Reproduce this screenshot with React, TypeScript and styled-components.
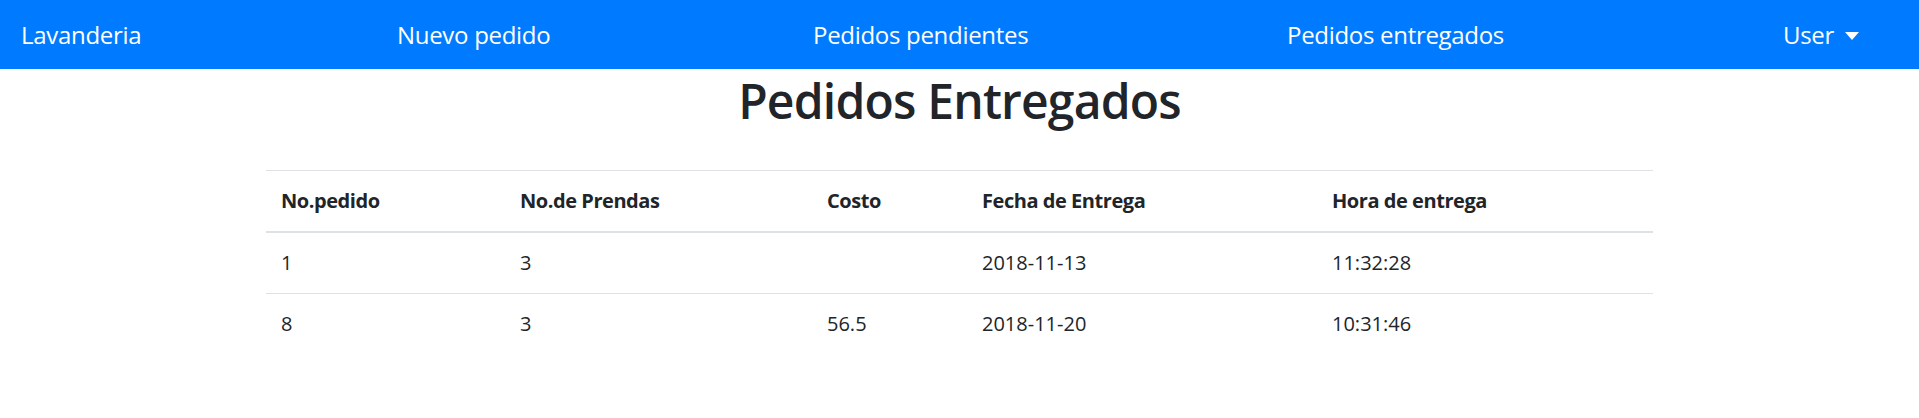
import React from "react";
import styled, { createGlobalStyle } from "styled-components";

const Global = createGlobalStyle`
  html, body { margin: 0; padding: 0; background: #fff; }
  body {
    font-family: "Open Sans", "Noto Sans", sans-serif;
    font-size: 20px;
    line-height: 1.5;
    color: #212529;
  }
  * { box-sizing: border-box; }
`;

const NavBar = styled.nav`
  height: 69px;
  background: #007bff;
  display: grid;
  grid-template-columns: 376px 416px 474px 496px auto;
  align-items: center;
  padding-left: 21px;
`;

const NavItem = styled.a`
  color: #fff;
  font-size: 24px;
  letter-spacing: -0.3px;
  line-height: 1.5;
  text-decoration: none;
  white-space: nowrap;
  display: flex;
  align-items: center;
`;

const Caret = styled.span`
  display: inline-block;
  width: 0;
  height: 0;
  margin-left: 11px;
  margin-top: 2px;
  border-top: 8px solid #fff;
  border-left: 7px solid transparent;
  border-right: 7px solid transparent;
`;

const Title = styled.h1`
  margin: 2px 0 39px;
  text-align: center;
  font-size: 48px;
  font-weight: 600;
  letter-spacing: -0.8px;
  line-height: 60px;
  color: #212529;
`;

const Table = styled.table`
  width: 1387px;
  margin: 0 auto;
  border-collapse: collapse;
  table-layout: fixed;
`;

const HeadCell = styled.th<{ $w?: number }>`
  width: ${(p) => (p.$w ? `${p.$w}px` : "auto")};
  padding: 15px;
  text-align: left;
  font-weight: 700;
  font-size: 20px;
  letter-spacing: -0.45px;
  line-height: 30px;
  border-top: 1px solid #dee2e6;
  border-bottom: 2.5px solid #dee2e6;
  vertical-align: bottom;
`;

const Cell = styled.td`
  padding: 15px;
  font-size: 20px;
  line-height: 30px;
  border-top: 1px solid #dee2e6;
  vertical-align: top;
`;

const columns = [
  { label: "No.pedido", w: 239 },
  { label: "No.de Prendas", w: 307 },
  { label: "Costo", w: 155 },
  { label: "Fecha de Entrega", w: 350 },
  { label: "Hora de entrega", w: 336 },
];

const rows = [
  ["1", "3", "", "2018-11-13", "11:32:28"],
  ["8", "3", "56.5", "2018-11-20", "10:31:46"],
];

export default function App() {
  return (
    <>
      <Global />
      <NavBar>
        <NavItem href="#">Lavanderia</NavItem>
        <NavItem href="#">Nuevo pedido</NavItem>
        <NavItem href="#">Pedidos pendientes</NavItem>
        <NavItem href="#">Pedidos entregados</NavItem>
        <NavItem href="#">
          User
          <Caret />
        </NavItem>
      </NavBar>
      <Title>Pedidos Entregados</Title>
      <Table>
        <thead>
          <tr>
            {columns.map((c) => (
              <HeadCell key={c.label} $w={c.w}>
                {c.label}
              </HeadCell>
            ))}
          </tr>
        </thead>
        <tbody>
          {rows.map((r, i) => (
            <tr key={i}>
              {r.map((v, j) => (
                <Cell key={j}>{v}</Cell>
              ))}
            </tr>
          ))}
        </tbody>
      </Table>
    </>
  );
}
